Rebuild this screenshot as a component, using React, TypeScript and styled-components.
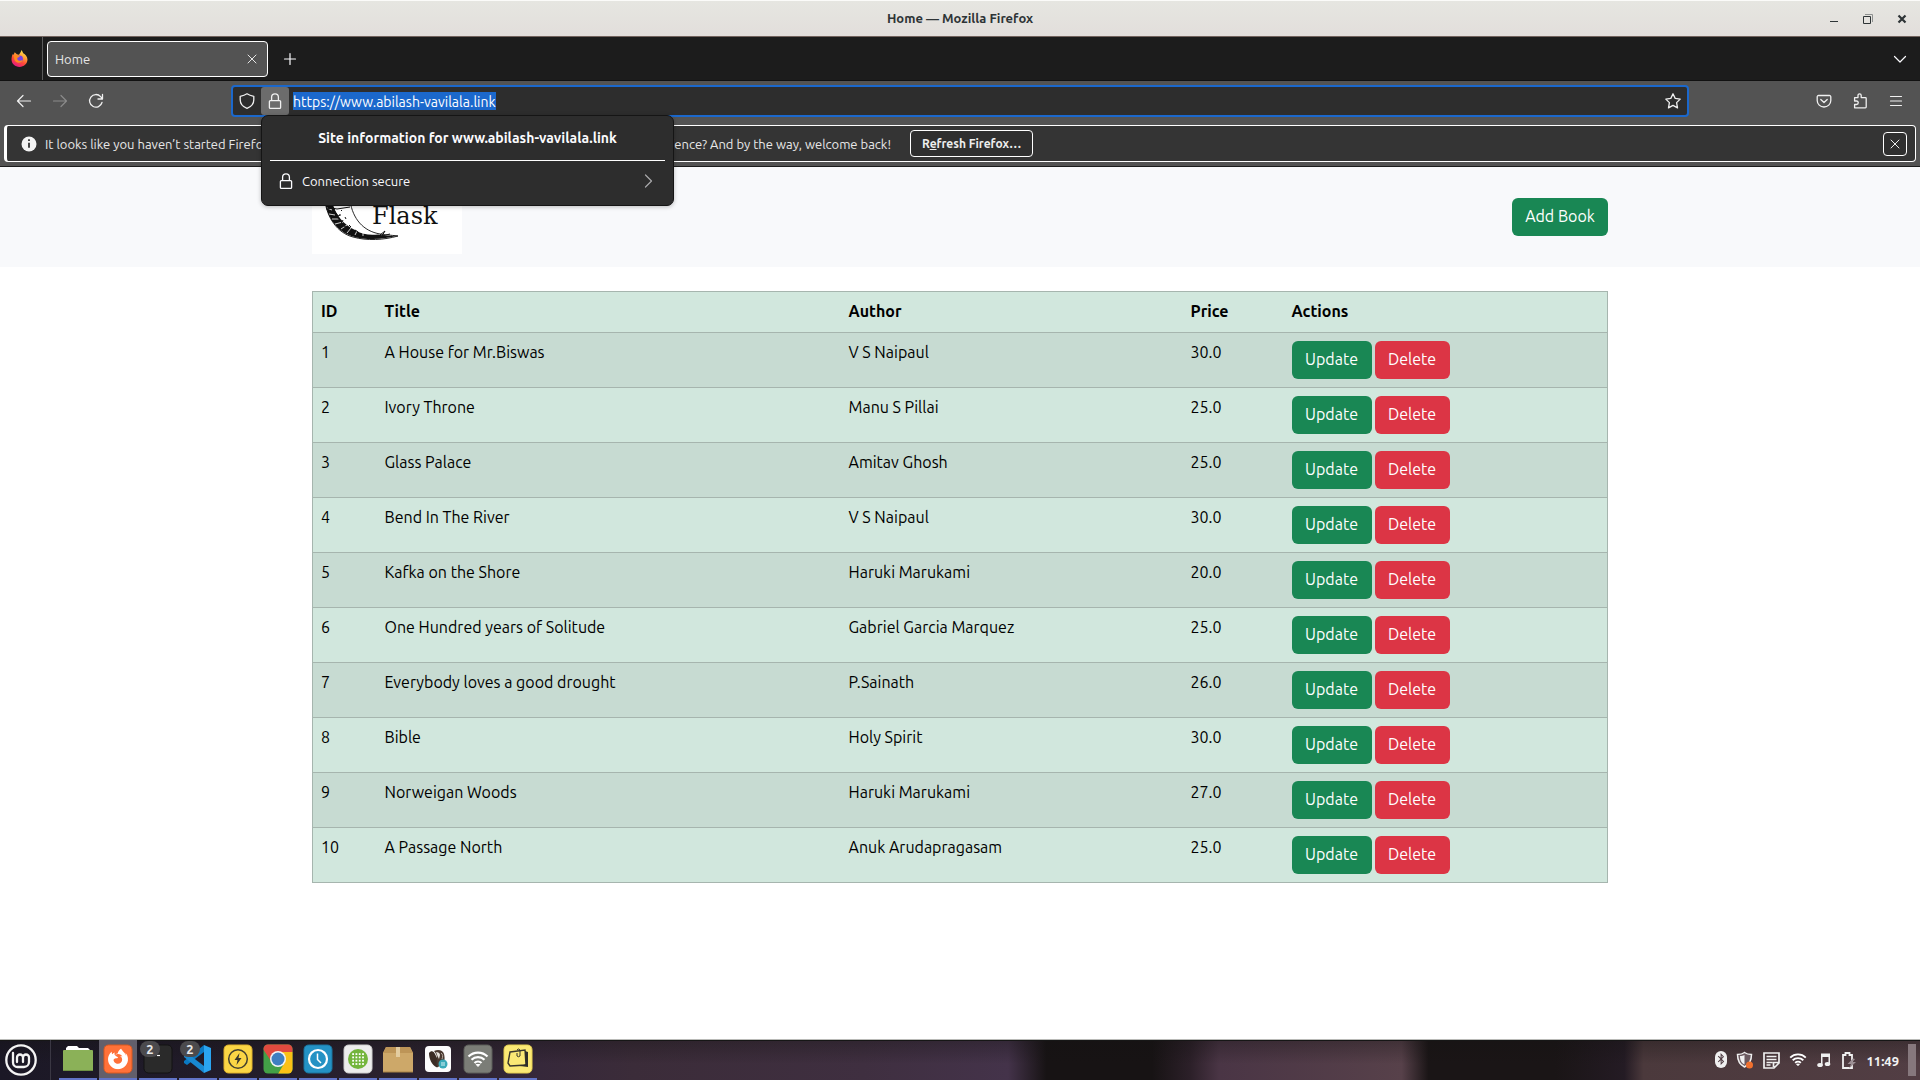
import React from "react";
import styled, { createGlobalStyle, css } from "styled-components";
import { FaFirefoxBrowser, FaBluetoothB } from "react-icons/fa";

const UI_FONT = `Ubuntu, "Noto Sans", "Open Sans", sans-serif`;

const GlobalStyle = createGlobalStyle`
  *, *::before, *::after { box-sizing: border-box; }
  body { margin: 0; font-family: ${UI_FONT}; background: #fff; }
  button, input { font-family: inherit; margin: 0; }
  svg { display: block; flex: none; }
`;

const Desktop = styled.div`
  display: flex;
  flex-direction: column;
  min-height: 100vh;
`;

/* ---------- window frame ---------- */

const TitleBar = styled.header`
  display: grid;
  grid-template-columns: 1fr auto 1fr;
  align-items: center;
  height: 37px;
  padding: 0 12px;
  border-top: 1px solid #fbfbf9;
  border-bottom: 1px solid #72635d;
  background: linear-gradient(#e6e6e1, #e2dedb);
`;

const WindowTitle = styled.h1`
  grid-column: 2;
  margin: 0;
  padding-bottom: 2px;
  font-size: 13px;
  font-weight: 600;
  line-height: 18px;
  color: #2e3436;
`;

const WindowControls = styled.div`
  display: flex;
  justify-content: flex-end;
  gap: 22px;
`;

const PlainButton = styled.button`
  display: flex;
  align-items: center;
  justify-content: center;
  padding: 0;
  border: 0;
  background: none;
  color: inherit;
`;

const TabStrip = styled.nav`
  display: flex;
  align-items: center;
  height: 44px;
  padding-right: 12px;
  border-bottom: 1px solid #111;
  background: #1c1c1c;
  color: #fbfbfe;
`;

const FirefoxView = styled(PlainButton)`
  align-self: stretch;
  width: 43px;
  padding-right: 3px;
  border-right: 1px solid #5b5b5b;
`;

const Tab = styled.div`
  display: flex;
  align-items: center;
  justify-content: space-between;
  width: 221px;
  height: 36px;
  margin: 0 14px 0 4px;
  padding: 0 7px;
  border: 1px solid #fff;
  border-radius: 4px;
  background: #535353;
  font-size: 13px;
  color: #e6e6e6;
`;

const Push = styled.div`
  flex: 1;
`;

const ToolArea = styled.div`
  position: relative;
  padding: 4px 4px;
  border-bottom: 1px solid #1c1c1c;
  background: #535353;
  color: #f0f0f0;
`;

const NavBar = styled.div`
  display: flex;
  align-items: center;
  height: 32px;
  padding: 0 10px;
`;

const NavGroup = styled.div`
  display: flex;
  align-items: center;
  gap: 16px;
`;

const NavButton = styled(PlainButton)`
  width: 20px;
  height: 20px;
  &:disabled { color: #8b8b8b; }
`;

const AddressBar = styled.form`
  display: flex;
  flex: 1;
  align-items: center;
  height: 32px;
  margin: 0 125px;
  padding-right: 6px;
  border: 2px solid #1b68cc;
  border-radius: 4px;
  background: #2d2d2d;
`;

const AddressIcon = styled(PlainButton)<{ $open?: boolean }>`
  width: 28px;
  height: 28px;
  border-radius: 3px;
  ${(p) => p.$open && css`background: #6c6c6c;`}
`;

const AddressText = styled.input`
  field-sizing: content;
  height: 18px;
  margin-left: 4px;
  padding: 1px 0 0;
  border: 0;
  outline: 0;
  background: #1b68cc;
  color: #fff;
  font-size: 14px;
  line-height: 17px;
`;

const Notice = styled.div`
  display: flex;
  align-items: center;
  height: 37px;
  margin-top: 8px;
  padding: 0 8px 0 14px;
  border: 1px solid #fff;
  border-left-width: 3px;
  border-radius: 4px;
  background: #343434;
  font-size: 13px;
  color: #e8e8e8;
`;

const NoticeText = styled.p`
  display: flex;
  justify-content: space-between;
  flex: 0 0 846px;
  margin: 0 19px 0 8px;
  line-height: 18px;
  white-space: nowrap;
`;

const OutlineButton = styled.button`
  height: 27px;
  padding: 0 11px;
  border: 1px solid #fff;
  border-radius: 4px;
  background: #2f2f2f;
  color: #ededed;
  font-size: 12px;
  font-weight: 700;
`;

const CloseNotice = styled(OutlineButton)`
  display: flex;
  align-items: center;
  justify-content: center;
  width: 24px;
  height: 24px;
  padding: 0;
`;

/* Floats over the toolbar, the notice and the page */
const SitePanel = styled.section`
  position: absolute;
  z-index: 2;
  top: 34px;
  left: 261px;
  width: 413px;
  padding: 8px 8px;
  border: 1px solid #151515;
  border-radius: 7px;
  background: #2d2d2d;
  color: #fbfbfe;
  font-size: 13px;
  box-shadow: 0 1px 4px rgba(0, 0, 0, 0.25);
`;

const PanelTitle = styled.h2`
  margin: 0;
  padding: 4px 0 12px;
  border-bottom: 1px solid #fff;
  font-size: 14px;
  line-height: 20px;
  text-align: center;
`;

const PanelRow = styled.button`
  display: flex;
  align-items: center;
  gap: 8px;
  width: 100%;
  height: 28px;
  margin: 6px 0 2px;
  padding: 0 8px;
  border: 0;
  background: none;
  color: inherit;
  font-size: 13px;
  text-align: left;
`;

const RowArrow = styled.span`
  color: #a9a9ab;
`;

/* ---------- web page ---------- */

const Page = styled.main`
  flex: 1;
  background: #fff;
`;

const SiteHeader = styled.div`
  background: #f8f9fb;
`;

const Container = styled.div`
  max-width: 1320px;
  margin: 0 auto;
  padding: 0 12px;
`;

const HeaderRow = styled(Container)`
  display: flex;
  align-items: center;
  justify-content: space-between;
  padding: 12px 12px 13px;
`;

const ActionButton = styled.button<{ $tone: "success" | "danger"; $width: number }>`
  width: ${(p) => p.$width}px;
  height: 38px;
  padding: 0 0 2px;
  border: 0;
  border-radius: 6px;
  background: ${(p) => (p.$tone === "success" ? "#198754" : "#dc3545")};
  color: #fff;
  font-size: 16px;
  line-height: 24px;
`;

const BookTable = styled.table`
  width: 100%;
  margin-top: 24px;
  border: 1px solid #a6b5ae;
  border-collapse: collapse;
  table-layout: fixed;
  background: #d1e7dd;
  color: #000;
  font-size: 16px;
  line-height: 22px;
`;

const Col = styled.col<{ $width?: number }>`
  ${(p) => p.$width && css`width: ${p.$width}px;`}
`;

const Row = styled.tr`
  border-bottom: 1px solid #a6b5ae;
  tbody &:nth-child(odd) { background: #c7dbd2; }
`;

const HeadCell = styled.th`
  padding: 8px 8px 10px;
  text-align: left;
  font-weight: 700;
`;

const Cell = styled.td`
  padding: 8px;
  vertical-align: top;
`;

const Actions = styled.div`
  display: flex;
  gap: 3px;
`;

/* ---------- desktop panel ---------- */

const Taskbar = styled.footer`
  display: flex;
  align-items: center;
  height: 41px;
  border-top: 1px solid #b9bab7;
  box-shadow: inset 0 1px #161616;
  background:
    linear-gradient(rgba(20, 18, 18, 0.35), transparent 60%),
    linear-gradient(90deg, #1b1826 0%, #221c2a 12%, #2e2431 24%, #36283a 28%, #3b2c39 33%, #3f2f40 45%, #44334a 52.5%,
      #171314 54.5%, #171314 60%, #2c2029 62%, #4a3545 63.5%, #57414a 73%, #1a1516 74.4%, #1a1516 81%,
      #241b24 84.6%, #4b393c 85.6%, #523e44 100%);
  color: #f2f2f2;
`;

const MenuButton = styled(PlainButton)`
  width: 51px;
  height: 40px;
  padding-right: 9px;
  border-right: 1px solid #3a3743;
`;

const AppList = styled.div`
  display: flex;
  gap: 2px;
  margin-left: 8px;
`;

const AppButton = styled.button<{ $active?: boolean }>`
  position: relative;
  display: flex;
  justify-content: center;
  width: 38px;
  height: 40px;
  padding: 4px 0 0;
  border: 0;
  border-bottom: 2px solid #6274c8;
  background: ${(p) => (p.$active ? "#625f6b" : "none")};
`;

const Badge = styled.span`
  position: absolute;
  top: 1px;
  left: 1px;
  width: 20px;
  height: 16px;
  border-radius: 8px;
  background: #4b4a4d;
  color: #e8e8e8;
  font-size: 13px;
  font-weight: 600;
  line-height: 16px;
`;

const Tray = styled.div`
  display: flex;
  align-items: center;
  gap: 9px;
  margin-left: auto;
  padding-right: 4px;
`;

const Clock = styled.time`
  padding-top: 2px;
  font-size: 13px;
  font-weight: 700;
`;

const ShowDesktop = styled.button`
  width: 8px;
  height: 32px;
  padding: 0;
  border: 0;
  background: #86787d;
`;

/* ---------- drawings ---------- */

const Line = ({ d, size = 16, box = 16, w = 1.2 }: { d: string; size?: number; box?: number; w?: number }) => (
  <svg width={size} height={size} viewBox={`0 0 ${box} ${box}`} fill="none" stroke="currentColor" strokeWidth={w} strokeLinecap="round" strokeLinejoin="round" aria-hidden>
    <path d={d} />
  </svg>
);

const LockIcon = () => <Line d="M3.4 7.6h9.2a1 1 0 0 1 1 1v5.8a1 1 0 0 1-1 1H3.4a1 1 0 0 1-1-1V8.600a1 1 0 0 1 1-1ZM4.600 7.400V4.200a3.400 3.400 0 0 1 6.800 0v3.200" w={1.3} />;

const FirefoxMark = () => (
  <svg width="17" height="17" viewBox="0 0 32 32" aria-hidden>
    <defs>
      <linearGradient id="fx-body" x1="0.8" y1="0" x2="0.3" y2="1">
        <stop offset="0" stopColor="#fff44f" />
        <stop offset="0.35" stopColor="#ffa436" />
        <stop offset="0.65" stopColor="#ff4a36" />
        <stop offset="1" stopColor="#e31587" />
      </linearGradient>
    </defs>
    <path d="M3 8l2 1 2-5 4 4 4 1 3-5 2-4 3 6c4 2 8 6 8 12 0 8-7 14-15 14S1 26 1 18c0-4 1-8 2-10Z" fill="url(#fx-body)" />
    <circle cx="16" cy="17" r="6.500" fill="#7542e5" />
    <path d="M5 9c4 0 6 1 7 2h5c-1 3-4 3-5 4-1 3 2 6 6 5 2 0 3-1 4-1-1 4-4 5-7 5-5 0-9-4-9-8Z" fill="#ff8a1e" />
  </svg>
);

const FlaskLogo = () => (
  <svg width="150" height="75" viewBox="0 0 150 75" role="img" aria-label="Flask">
    <rect width="150" height="75" fill="#fff" />
    <path d="M13 22C15 38 25 54 41 58c14 4 31 3 45-1-8-1-13-1-18-2C51 52 41 40 38 22" fill="#fff" stroke="#111" strokeWidth="0.900" />
    <path d="M13 22C15 38 25 53 41 57.500c14 4 31 3 45-1-9 1-15 0-20-1-8 1-16 0-22-4C32 46 23 36 20 22Z" fill="#111" />
    <path d="M15 29l5 2m-3 4l6 1m-3 4l7 0m-4 5l8-2m-2 7l6-4m0 8l4-5m4 7l2-4m6 5l0-4" stroke="#fff" strokeWidth="0.800" />
    <path d="M14 30l6-1 5 1 13-2M24 34l2 3 2-1m-1 5l3 2 1-2m1 6l4 2M29 31l1 1m-2 3v2m5 1l1 2m3 6l2 2m4 3l3 2M22 30l2 6 4 6 5 5M68 56l5-4-3 5 8-2" stroke="#111" strokeWidth="1" fill="none" />
    <text x="60" y="45" fontFamily="'DejaVu Serif', 'Liberation Serif', serif" fontSize="24" fill="#111">Flask</text>
  </svg>
);

const Tile = ({ children, fill, rim = "#00000055" }: { children?: React.ReactNode; fill: string; rim?: string }) => (
  <svg width="30" height="30" viewBox="0 0 30 30" aria-hidden>
    <rect x="1" y="1" width="28" height="28" rx="4.500" fill={fill} stroke={rim} />
    {children}
  </svg>
);

const FolderArt = () => (
  <svg width="32" height="30" viewBox="0 0 32 30" aria-hidden>
    <path d="M4 11V4l2-2h9l2 2h9l2 2v5Z" fill="#fff" />
    <rect x="1" y="6" width="30" height="21" rx="1" fill="#8bb158" />
    <path d="M1 26.500h30" stroke="#6f9143" />
  </svg>
);

const FirefoxArt = () => (
  <Tile fill="#ff7139" rim="#d9581f">
    <FaFirefoxBrowser x="4.500" y="4.500" size={21} color="#fff" />
  </Tile>
);

const TerminalArt = () => (
  <Tile fill="#2a2a2a" rim="#121212">
    <path d="M14 11.500h3" stroke="#fff" strokeWidth="1.200" />
  </Tile>
);

const CodeArt = () => (
  <svg width="30" height="30" viewBox="0 0 30 30" aria-hidden>
    <path d="M21 1l7 3v22l-7 3Z" fill="#2aa4f0" />
    <path d="M21 8L4 21l-3-2v-2L21 1Z" fill="#0a78c2" />
    <path d="M21 22L4 9l-3 2v2l20 16Z" fill="#1889d2" />
  </svg>
);

const BoltArt = () => (
  <Tile fill="#fbd645" rim="#e0b22c">
    <circle cx="15" cy="15" r="9.300" fill="none" stroke="#43402f" strokeWidth="1.500" />
    <path d="M16.500 9l-5 7h3l-1 5 5-7h-3Z" fill="#3a382c" />
  </Tile>
);

const ChromeArt = () => (
  <svg width="30" height="30" viewBox="0 0 30 30" aria-hidden>
    <clipPath id="chrome-tile"><rect x="0.500" y="0.500" width="29" height="29" rx="4.500" /></clipPath>
    <g clipPath="url(#chrome-tile)">
      <rect width="30" height="30" fill="#43a047" />
      <path d="M0 5V0h30v8H15L8 17Z" fill="#e04a3f" />
      <path d="M15 8h15v22H15l7-12Z" fill="#fbc116" />
      <circle cx="15" cy="15" r="8" fill="#f4f4f4" />
      <circle cx="15" cy="15" r="6.500" fill="#3f7fc0" />
    </g>
  </svg>
);

const ClockArt = () => (
  <Tile fill="#2492c4" rim="#1a759f">
    <circle cx="15" cy="15" r="9" fill="none" stroke="#fff" strokeWidth="2.200" />
    <path d="M14.500 9.500v6l3.500 3.500" fill="none" stroke="#fff" strokeWidth="1.500" />
  </Tile>
);

const GridArt = () => (
  <Tile fill="#ededed" rim="#cfcfcf">
    <circle cx="15" cy="15" r="10" fill="#73b53c" />
    {[10, 13.300, 16.600, 19.900].map((y) =>
      [10, 13.300, 16.600, 19.900].map((x) => <rect key={`${x}-${y}`} x={x - 0.800} y={y - 0.800} width="1.800" height="1.800" fill="#fff" />)
    )}
  </Tile>
);

const BoxArt = () => (
  <svg width="30" height="30" viewBox="0 0 30 30" aria-hidden>
    <path d="M3 3h24l3 6v19H0V9Z" fill="#cda869" />
    <path d="M3 3h24l3 6H0Z" fill="#bd9557" />
    <path d="M0 28h30" stroke="#a88347" />
    <path d="M13 3h4v10h-4Z" fill="#e3cda0" />
  </svg>
);

const BeaverArt = () => (
  <svg width="30" height="30" viewBox="0 0 30 30" aria-hidden>
    <rect x="2" y="2" width="26" height="26" rx="4" fill="#fdfdfd" />
    <path d="M6 9c2-3 5-2 6 1l4 8c1 4-1 6-3 5-4-2-7-8-7-14Z" fill="#3b2c25" />
    <path d="M11 7c4-2 9-1 10 3 1 4 1 8-2 11l-5 2c-1-4 0-7 0-9s-1-5-3-7Z" fill="#4a3930" />
    <path d="M13 8c2 0 4 1 4 3l-1 4c-1-2-2-4-3-7Z" fill="#e8e3dd" />
    <path d="M18 9c2 1 2 4 1 6" stroke="#b8aba2" fill="none" />
    <circle cx="20" cy="20" r="4.500" fill="#3aa9b8" />
    <path d="M18 19h4M18 21h4" stroke="#d6f1f4" />
  </svg>
);

const WifiShape = () => (
  <g fill="none" stroke="#fff" strokeWidth="2.200">
    <path d="M5.500 12.500a13.500 13.500 0 0 1 19 0M8.500 15.800a9.300 9.300 0 0 1 13 0M11.500 19a5 5 0 0 1 7 0" />
    <path d="M13.200 20.500h3.600L15 22.500Z" fill="#fff" strokeWidth="1" />
  </g>
);

const WifiArt = () => <Tile fill="#7b7d77" rim="#5d5f5a"><WifiShape /></Tile>;

const NotesArt = () => (
  <Tile fill="#fbe975" rim="#e5cf52">
    <path d="M7 8l15-2 1 15-16 1-2-3Z" fill="#fbe975" stroke="#38362c" strokeWidth="1.400" />
    <path d="M22 7l3 1v15l-8-1 6-2Z" fill="#2e2d29" />
    <path d="M14 9v3q1.500 1.500 3 0V6q-1.500-2-3 0" fill="none" stroke="#38362c" strokeWidth="1" />
  </Tile>
);

const MintArt = () => (
  <svg width="34" height="34" viewBox="0 0 34 34" fill="none" stroke="#f4f4f4" strokeWidth="2.300" strokeLinecap="round" aria-hidden>
    <circle cx="17" cy="17" r="14.700" />
    <path d="M9 10v9.500a4.500 4.500 0 0 0 4.500 4.500H20a5 5 0 0 0 5-5v-4.500a3 3 0 0 0-6 0V19M19 14.500a3 3 0 0 0-6 0V19" />
  </svg>
);

const BluetoothTray = () => (
  <svg width="12" height="18" viewBox="0 0 12 18" aria-hidden>
    <rect width="12" height="17" rx="6" fill="#f0f0f0" />
    <FaBluetoothB x="0" y="2" size={12} color="#4d3a40" />
  </svg>
);

const ShieldTray = () => (
  <svg width="18" height="18" viewBox="0 0 18 18" aria-hidden>
    <path d="M8.500 1.500c2 1.500 4 2 7 2 0 6-2 10-7 12.500-5-2.500-7-6.500-7-12.500 3 0 5-.5 7-2Z" fill="#6b5a60" stroke="#f0f0f0" strokeWidth="1.500" />
    <path d="M8.500 4v9.500C5 11.500 4 9 4 5c2 0 3-.3 4.500-1Z" fill="#f0f0f0" />
    <circle cx="13.500" cy="14" r="3.500" fill="#f0702e" />
  </svg>
);

const NoteTray = () => (
  <svg width="17" height="17" viewBox="0 0 17 17" fill="none" stroke="#f0f0f0" strokeWidth="1.700" aria-hidden>
    <path d="M1 1h15v10l-5 5H1ZM3.500 4.500h10M3.500 7.500h10M3.500 10.500h6M3.500 13h4M10.500 15v-4.500H16" />
  </svg>
);

const WifiTray = () => (
  <svg width="18" height="16" viewBox="4 7 22 17" aria-hidden><WifiShape /></svg>
);

const MusicTray = () => (
  <svg width="16" height="16" viewBox="0 0 16 16" fill="#f0f0f0" aria-hidden>
    <path d="M5 1.500h9v11h-1.500V5h-6v8.500H5Z" />
    <ellipse cx="4" cy="13" rx="2.800" ry="2" />
    <ellipse cx="11.500" cy="12" rx="2.800" ry="2" />
  </svg>
);

const BatteryTray = () => (
  <svg width="16" height="17" viewBox="0 0 16 17" aria-hidden>
    <path d="M2 16V3h2.500V1h4v2H11v13Z" fill="none" stroke="#f0f0f0" strokeWidth="1.800" />
    <path d="M12 6.500L6.500 12H10l-2 4.500 7-6.500h-3.500l2.500-3Z" fill="#9b8e93" />
  </svg>
);

/* ---------- data ---------- */

type Book = { id: number; title: string; author: string; price: string };

const books: Book[] = [
  { id: 1, title: "A House for Mr.Biswas", author: "V S Naipaul", price: "30.0" },
  { id: 2, title: "Ivory Throne", author: "Manu S Pillai", price: "25.0" },
  { id: 3, title: "Glass Palace", author: "Amitav Ghosh", price: "25.0" },
  { id: 4, title: "Bend In The River", author: "V S Naipaul", price: "30.0" },
  { id: 5, title: "Kafka on the Shore", author: "Haruki Marukami", price: "20.0" },
  { id: 6, title: "One Hundred years of Solitude", author: "Gabriel Garcia Marquez", price: "25.0" },
  { id: 7, title: "Everybody loves a good drought", author: "P.Sainath", price: "26.0" },
  { id: 8, title: "Bible", author: "Holy Spirit", price: "30.0" },
  { id: 9, title: "Norweigan Woods", author: "Haruki Marukami", price: "27.0" },
  { id: 10, title: "A Passage North", author: "Anuk Arudapragasam", price: "25.0" },
];

const apps: { name: string; Art: React.FC; count?: number; active?: boolean }[] = [
  { name: "Files", Art: FolderArt },
  { name: "Firefox", Art: FirefoxArt, active: true },
  { name: "Terminal", Art: TerminalArt, count: 2 },
  { name: "Code", Art: CodeArt, count: 2 },
  { name: "Power", Art: BoltArt },
  { name: "Chrome", Art: ChromeArt },
  { name: "Timeshift", Art: ClockArt },
  { name: "Apps", Art: GridArt },
  { name: "Packages", Art: BoxArt },
  { name: "Database", Art: BeaverArt },
  { name: "Network", Art: WifiArt },
  { name: "Notes", Art: NotesArt },
];

export default function App() {
  return (
    <Desktop>
      <GlobalStyle />
      <TitleBar>
        <WindowTitle>Home — Mozilla Firefox</WindowTitle>
        <WindowControls>
          <PlainButton aria-label="Minimize">
            <svg width="12" height="12" viewBox="0 0 12 12"><path d="M2 8.500h8" stroke="#2e3436" /></svg>
          </PlainButton>
          <PlainButton aria-label="Restore">
            <svg width="12" height="12" viewBox="0 0 12 12" fill="none"><path d="M3 1.500h7.500V9" stroke="#8e9190" /><path d="M1.500 3.500h7v7h-7z" stroke="#2e3436" /></svg>
          </PlainButton>
          <PlainButton aria-label="Close window">
            <svg width="12" height="12" viewBox="0 0 12 12"><path d="M2.500 2.500l7 7m0-7l-7 7" stroke="#2e3436" strokeWidth="2.200" /></svg>
          </PlainButton>
        </WindowControls>
      </TitleBar>

      <TabStrip>
        <FirefoxView aria-label="Firefox View"><FirefoxMark /></FirefoxView>
        <Tab>
          Home
          <PlainButton aria-label="Close tab"><Line d="M4 4l8 8M12 4l-8 8" w={1} /></PlainButton>
        </Tab>
        <PlainButton aria-label="New tab"><Line d="M8 2.500v11M2.500 8h11" /></PlainButton>
        <Push />
        <PlainButton aria-label="List all tabs"><Line d="M2.500 5.500L8 11l5.500-5.500" w={1.2} /></PlainButton>
      </TabStrip>

      <ToolArea>
        <NavBar>
          <NavGroup>
            <NavButton aria-label="Back"><Line d="M14.500 8h-13M7 2.500L1.500 8 7 13.500" /></NavButton>
            <NavButton aria-label="Forward" disabled><Line d="M1.500 8h13M9 2.500L14.500 8 9 13.500" /></NavButton>
            <NavButton aria-label="Reload"><Line d="M14 9.500A6.300 6.300 0 1 1 12.600 3.600L14.300 5.600M14.500 1.500V6H10" w={1.3} /></NavButton>
          </NavGroup>
          <AddressBar onSubmit={(e) => e.preventDefault()}>
            <AddressIcon type="button" aria-label="Tracking protection">
              <Line d="M8 .8c2 1.300 4.200 2 6.800 2.500v3.400c0 4-2.600 7-6.800 8.600C3.800 13.700 1.200 10.700 1.200 6.700V3.300C3.800 2.800 6 2.100 8 .8Z" w={1.3} />
            </AddressIcon>
            <AddressIcon type="button" $open aria-label="Site information"><LockIcon /></AddressIcon>
            <AddressText aria-label="Address" size={26} defaultValue="https://www.abilash-vavilala.link" spellCheck={false} />
            <Push />
            <PlainButton type="button" aria-label="Bookmark this page">
              <Line d="M8 .8l2.200 4.600 5 .7-3.600 3.500.9 5.300L8 12.400l-4.500 2.500.9-5.300L.8 6.100l5-.7Z" w={1.3} />
            </PlainButton>
          </AddressBar>
          <NavGroup>
            <NavButton aria-label="Save to Pocket">
              <Line d="M2.500 2.500h11a1.300 1.300 0 0 1 1.300 1.300V7.500a6.800 6.500 0 0 1-13.600 0V3.800A1.300 1.300 0 0 1 2.500 2.500ZM4.800 6.500L8 9.500l3.200-3" w={1.3} />
            </NavButton>
            <NavButton aria-label="Extensions">
              <Line d="M2.600 8V4.600H6V2.400a1.600 1.600 0 0 1 3.200 0v2.200h4.200a.8.8 0 0 1 .8.8V14a.8.8 0 0 1-.8.8H2.600V11.500H4.500a1.600 1.600 0 0 0 0-3.500Z" w={1.3} />
            </NavButton>
            <NavButton aria-label="Menu"><Line d="M2.500 3.500h11M2.500 8h11M2.500 12.500h11" /></NavButton>
          </NavGroup>
        </NavBar>

        <Notice role="status">
          <svg width="16" height="16" viewBox="0 0 16 16" aria-hidden>
            <circle cx="8" cy="8" r="7.500" fill="#f4f4f4" />
            <path d="M8 3.200v1.800M8 6.800v5" stroke="#343434" strokeWidth="1.800" />
          </svg>
          <NoticeText>
            <span>It looks like you haven’t started Firefox in a while.</span>
            <span>Do you want to clean it up for a fresh, like-new experience? And by the way, welcome back!</span>
          </NoticeText>
          <OutlineButton>R<u>e</u>fresh Firefox…</OutlineButton>
          <Push />
          <CloseNotice aria-label="Close this message"><Line d="M4 4l8 8M12 4l-8 8" w={1} /></CloseNotice>
        </Notice>

        <SitePanel>
          <PanelTitle>Site information for www.abilash-vavilala.link</PanelTitle>
          <PanelRow>
            <LockIcon />
            Connection secure
            <Push />
            <RowArrow><Line d="M4.500 2L10.500 8l-6 6" /></RowArrow>
          </PanelRow>
        </SitePanel>
      </ToolArea>

      <Page>
        <SiteHeader>
          <HeaderRow>
            <FlaskLogo />
            <ActionButton $tone="success" $width={96}>Add Book</ActionButton>
          </HeaderRow>
        </SiteHeader>
        <Container>
          <BookTable>
            <colgroup>
              <Col $width={64} />
              <Col $width={464} />
              <Col $width={342} />
              <Col $width={101} />
              <Col />
            </colgroup>
            <thead>
              <Row>
                <HeadCell scope="col">ID</HeadCell>
                <HeadCell scope="col">Title</HeadCell>
                <HeadCell scope="col">Author</HeadCell>
                <HeadCell scope="col">Price</HeadCell>
                <HeadCell scope="col">Actions</HeadCell>
              </Row>
            </thead>
            <tbody>
              {books.map((book) => (
                <Row key={book.id}>
                  <Cell>{book.id}</Cell>
                  <Cell>{book.title}</Cell>
                  <Cell>{book.author}</Cell>
                  <Cell>{book.price}</Cell>
                  <Cell>
                    <Actions>
                      <ActionButton $tone="success" $width={80}>Update</ActionButton>
                      <ActionButton $tone="danger" $width={75}>Delete</ActionButton>
                    </Actions>
                  </Cell>
                </Row>
              ))}
            </tbody>
          </BookTable>
        </Container>
      </Page>

      <Taskbar>
        <MenuButton aria-label="Menu"><MintArt /></MenuButton>
        <AppList>
          {apps.map(({ name, Art, count, active }) => (
            <AppButton key={name} aria-label={name} $active={active}>
              <Art />
              {count && <Badge>{count}</Badge>}
            </AppButton>
          ))}
        </AppList>
        <Tray>
          <BluetoothTray />
          <ShieldTray />
          <NoteTray />
          <WifiTray />
          <MusicTray />
          <BatteryTray />
          <Clock>11:49</Clock>
          <ShowDesktop aria-label="Show desktop" />
        </Tray>
      </Taskbar>
    </Desktop>
  );
}
